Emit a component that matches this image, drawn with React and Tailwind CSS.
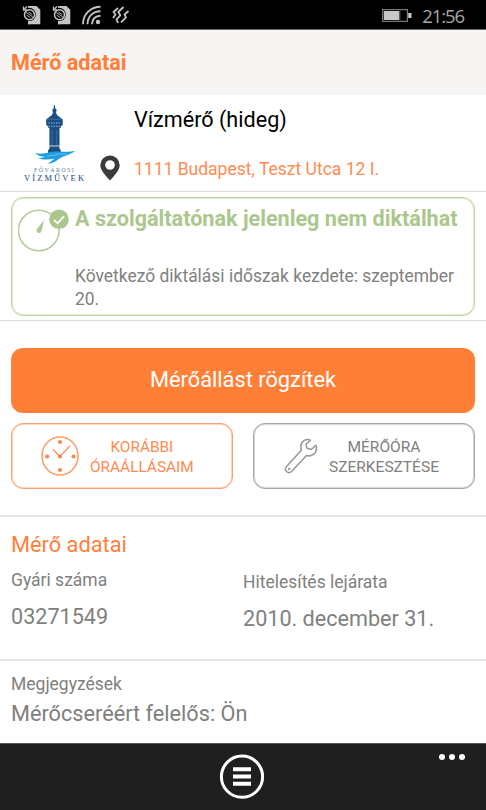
const SimIcon = () => (
  <svg width="20" height="20" viewBox="0 0 20 20">
    <path d="M6 1h8.500l3.800 3.800V19.200H6z" fill="#c4c4c4" />
    <circle cx="7" cy="9.500" r="6.800" fill="#000" />
    <path d="M6 16h2v3.200H6z" fill="#c4c4c4" />
    <circle cx="7.500" cy="9.700" r="5" fill="none" stroke="#c4c4c4" strokeWidth="1.500" />
    <path d="M4.200 7.500l6.600 4.400M6.500 7l3.800 2.500M4.700 10.200l3.800 2.500" stroke="#b4b4b4" strokeWidth="1" fill="none" />
    <path d="M1.500 1.500v3.500h3.500M5 1.500L2.500 4" stroke="#c4c4c4" strokeWidth="1.300" fill="none" />
  </svg>
)

const WifiIcon = () => (
  <svg width="20" height="20" viewBox="0 0 20 20" fill="none" stroke="#c4c4c4" strokeWidth="1.900">
    <path d="M1 19.300C1 9 9 1.800 18.500 1.800M5.500 19.300C5.500 11.500 11 6.300 18.500 6.300M10 19.300C10 14 13.500 10.700 18.500 10.700" />
    <circle cx="16" cy="17" r="2.200" fill="#c4c4c4" stroke="none" />
  </svg>
)

const VibrateIcon = () => (
  <svg width="18" height="20" viewBox="0 0 18 20" fill="none" stroke="#c4c4c4" strokeWidth="1.800" strokeLinejoin="round">
    <path d="M6 3L1.500 7l2 2.500L1 13M11.500 2L6.300 7l2 3.300L4.500 14.300 6 18M16.500 6l-4 3.500 1.500 2.800-5 5" />
  </svg>
)

const BatteryIcon = () => (
  <svg width="30" height="13" viewBox="0 0 30 13">
    <rect x="0.600" y="0.600" width="24.800" height="11.800" fill="#000" stroke="#777" strokeWidth="1.200" />
    <rect x="1.800" y="2" width="15.700" height="9" fill="#c8c8c8" />
    <path d="M18 1v11" stroke="#444" />
    <rect x="26.200" y="4" width="3.300" height="5" fill="#c8c8c8" />
  </svg>
)

const WaterTower = () => (
  <svg width="42" height="60" viewBox="0 0 42 60">
    <path d="M19.900 0h.9l.5 3.500 1.200 1v1.800l-.7.700 1.200 3 4.500 3.500 1.200 1v5.500l-1.700 1v1.500l-1.500.5v21l1.300 1v3l2 2.500c-3-.3-6 .5-8 1.300-3 1-6 1.200-9.200.8v-1.600l2.500-3v-3l1.300-1V23l-1.500-.5V21l-1.700-1v-5.500l1.200-1 4.500-3.500 1.200-3-.7-.7V4.500l1.200-1z" fill="#1a4f84" />
    <path d="M12.500 14.300h15.800" stroke="#4b77a3" strokeWidth="0.700" />
    <path d="M14.500 18h12M14.500 21.300h12" stroke="#a9c2da" strokeWidth="0.900" strokeDasharray="1.500 1" />
    <path d="M18 25v15M22.800 25v15" stroke="#4f7ba6" strokeWidth="0.700" />
    <path d="M14 41h12.500" stroke="#fff" strokeWidth="0.800" />
    <path d="M1 48c8 1.800 11-.5 18-1.300 7-1 12 1 22.300-.7C35 50.500 28 51 23.500 55c-3 2.500-7 4-10.500 3.500 4.500-1.500 5-3.500 8-5-6 1.500-13 1.500-17-.5 4 0 6-.7 7-1.500-4 0-7-.5-10-3.500z" fill="#1e9fdd" />
    <path d="M13 51c9-.5 10-2.800 20-2" stroke="#9ad4f0" strokeWidth="0.600" fill="none" />
  </svg>
)

const PinIcon = () => (
  <svg width="20" height="26" viewBox="0 0 20 26">
    <path fillRule="evenodd" d="M10 0.500a9.700 9.700 0 0 1 9.700 9.700C19.700 15.500 13 22 10 25.500 7 22 .3 15.500.3 10.200A9.700 9.700 0 0 1 10 .5zm0 4.700a4.800 4.800 0 1 0 0 9.600 4.800 4.800 0 0 0 0-9.600z" fill="#3b3b39" />
  </svg>
)

const GaugeIcon = () => (
  <svg width="52" height="44" viewBox="0 0 52 44">
    <circle cx="20.800" cy="22.500" r="20.300" fill="none" stroke="#b4cc99" strokeWidth="1.500" />
    <path d="M26.200 12l-3 11.800a2.600 2.600 0 0 1-4.700-2z" fill="#acc78d" />
    <circle cx="41" cy="11.300" r="9.800" fill="#acc78d" />
    <path d="M36 11.800l3.500 3.500L46 8.300" fill="none" stroke="#fff" strokeWidth="1.800" />
  </svg>
)

const ClockIcon = () => (
  <svg width="38" height="40" viewBox="0 0 38 40">
    <ellipse cx="19" cy="20" rx="18" ry="19" fill="none" stroke="#ff9a66" strokeWidth="1.500" />
    <path d="M12 13.500l6.800 7L29 10" fill="none" stroke="#ff9a66" strokeWidth="1.500" />
    <g fill="#ff8246">
      <circle cx="19" cy="6" r="2" />
      <circle cx="19" cy="34" r="2" />
      <circle cx="6.200" cy="20.500" r="2" />
      <circle cx="32.500" cy="20.500" r="2" />
      <circle cx="19" cy="20.500" r="2" />
    </g>
  </svg>
)

const WrenchIcon = () => (
  <svg width="34" height="36" viewBox="0 0 34 36" fill="none" stroke="#979797" strokeWidth="1.500" strokeLinejoin="round">
    <path d="M26.500 2.200C22 .2 16.800 3.500 16.800 8.500c0 1.500.2 2.600.6 3.700L2.500 28.500c-3 3.500 1.500 8 5 5L22.500 17.500c5 1.500 10-2 10-7 0-1.200-.2-2.200-.6-3.300l-4.600 4.300-4.300-1.200-1-4z" />
    <circle cx="5.200" cy="31" r="0.500" />
  </svg>
)

const MenuIcon = () => (
  <svg width="46" height="46" viewBox="0 0 46 46" fill="none" stroke="#fff">
    <circle cx="23" cy="22.700" r="20.600" strokeWidth="3" />
    <path d="M14 15.300h18M14 22.600h18M14 29.800h18" strokeWidth="4" />
  </svg>
)

function Field({ label, value, className }) {
  return (
    <div className={className}>
      <p className="text-[17.500px] leading-5">{label}</p>
      <p className="mt-[15px] text-[21.600px] leading-6">{value}</p>
    </div>
  )
}

export default function App() {
  return (
    <div className="flex h-[810px] w-[486px] flex-col overflow-hidden bg-white font-['Roboto',sans-serif] text-[#80807e]">
      <div className="flex h-[30px] items-center border-b border-[#6b6b6b] bg-black px-[22px] pt-px">
        <div className="flex gap-[10px]">
          <SimIcon />
          <SimIcon />
          <WifiIcon />
          <VibrateIcon />
        </div>
        <div className="ml-auto flex items-center gap-[10px]">
          <BatteryIcon />
          <span className="mt-px font-['Open_Sans',sans-serif] text-[18.500px] leading-6 tracking-[-1.100px] text-[#a6a6a6]">21:56</span>
        </div>
      </div>

      <header className="h-[65px] bg-[#f7f5f4] pl-[11px] pt-[21px]">
        <h1 className="text-[21.600px] font-bold leading-6 text-[#ff7f3a]">Mérő adatai</h1>
      </header>

      <section className="flex h-[97px] border-b border-[#dcdcdc]">
        <div className="flex w-[88px] flex-col pl-[24px] pt-[10px]">
          <div className="-ml-[3px] flex justify-center">
            <WaterTower />
          </div>
          <p className="ml-[10px] mt-[2px] whitespace-nowrap font-['Liberation_Serif',serif] text-[6px] leading-[6px] tracking-[1.400px] text-[#5f7fa5]">FŐVÁROSI</p>
          <p className="mt-px whitespace-nowrap font-['Liberation_Serif',serif] text-[8.500px] leading-[9px] tracking-[2.100px] text-[#14477d]">VÍZMŰVEK</p>
        </div>
        <div className="ml-3 mt-[60px]">
          <PinIcon />
        </div>
        <div className="ml-[14px] pt-[13px]">
          <h2 className="text-[21.600px] leading-6 text-black">Vízmérő (hideg)</h2>
          <p className="mt-[27px] text-[17.500px] leading-5 text-[#ff8b52]">1111 Budapest, Teszt Utca 12 I.</p>
        </div>
      </section>

      <section className="h-[129px] border-b border-[#dcdcdc] px-[11px] pt-[5px]">
        <div className="flex h-[119px] rounded-xl border border-[#c0d6a8] pl-[6px] shadow-[inset_0_0_0_1px_#dfead3]">
          <div className="w-[57px] pt-[10px]">
            <GaugeIcon />
          </div>
          <div className="pt-[9px]">
            <h3 className="whitespace-nowrap text-[21.600px] font-bold leading-6 text-[#acc78d]">A szolgáltatónak jelenleg nem diktálhat</h3>
            <p className="mt-[34px] whitespace-nowrap text-[17.450px] leading-[23px]">
              Következő diktálási időszak kezdete: szeptember
              <br />
              20.
            </p>
          </div>
        </div>
      </section>

      <section className="h-[196px] border-b-2 border-[#e6e6e6] px-[11px] pt-[27px]">
        <button className="block h-[65px] w-full rounded-xl bg-[#ff7f37] pb-[2px] text-[21.800px] leading-6 text-white">Mérőállást rögzítek</button>
        <div className="mt-[10px] flex justify-between">
          <button className="flex h-[66px] w-[222px] items-center rounded-xl border border-[#ff9e6c] pl-[29px] text-[15.400px] leading-[20px] text-[#ff8b52] shadow-[inset_0_0_0_1px_#ffd3bc]">
            <ClockIcon />
            <span className="ml-[11px] pt-[2px]">KORÁBBI<br />ÓRAÁLLÁSAIM</span>
          </button>
          <button className="flex h-[66px] w-[222px] items-center rounded-xl border border-[#a3a3a3] pl-[30px] text-[15.500px] leading-[20px] shadow-[inset_0_0_0_1px_#d6d6d6]">
            <WrenchIcon />
            <span className="ml-[11px] pt-[2px]">MÉRŐÓRA<br />SZERKESZTÉSE</span>
          </button>
        </div>
      </section>

      <section className="h-[144px] border-b-2 border-[#e6e6e6] pl-[11px] pt-[16px]">
        <h2 className="text-[21.800px] leading-6 text-[#ff7f3a]">Mérő adatai</h2>
        <div className="flex">
          <Field className="w-[232px] pt-[13px]" label="Gyári száma" value="03271549" />
          <Field className="pt-[15px]" label="Hitelesítés lejárata" value="2010. december 31." />
        </div>
      </section>

      <section className="flex-1 pl-[11px] pt-[13px]">
        <p className="text-[17.500px] leading-5">Megjegyzések</p>
        <p className="mt-[8px] text-[21.700px] leading-6">Mérőcseréért felelős: Ön</p>
      </section>

      <footer className="relative flex h-[67px] justify-center border-t border-[#555] bg-[#1f1f1f] pr-[2px] pt-[10px]">
        <MenuIcon />
        <div className="absolute right-[21px] top-[10px] flex gap-1">
          <span className="size-[6px] rounded-full bg-white" />
          <span className="size-[6px] rounded-full bg-white" />
          <span className="size-[6px] rounded-full bg-white" />
        </div>
      </footer>
    </div>
  )
}
